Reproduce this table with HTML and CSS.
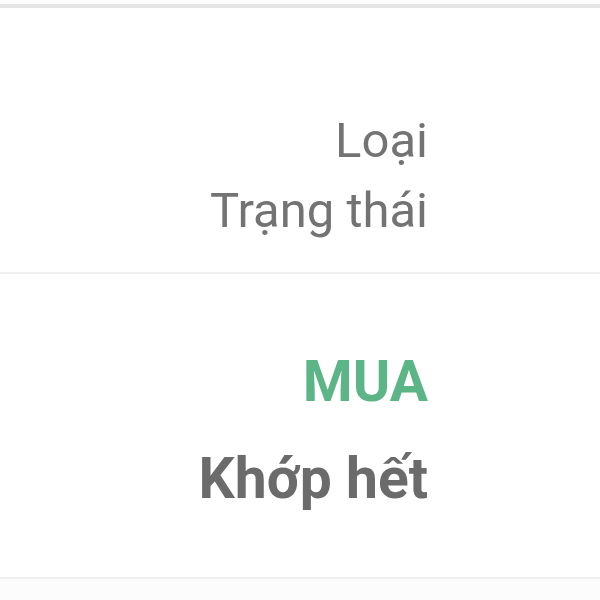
FILE: index.html
```html
<!DOCTYPE html>
<html>
<head>
<meta charset="utf-8">
<link rel="stylesheet" href="styles.css">
</head>
<body>
<div class="page">
  <div class="topline"></div>
  <section class="block labels">
    <div class="col">
      <div class="label">Loại</div>
      <div class="label">Trạng thái</div>
    </div>
  </section>
  <section class="block values">
    <div class="col">
      <div class="value buy">MUA</div>
      <div class="value">Khớp hết</div>
    </div>
  </section>
  <section class="block rest"></section>
</div>
</body>
</html>
```
FILE: styles.css
```css
html, body {
  margin: 0;
  padding: 0;
  background: #fdfdfd;
}
.page {
  width: 600px;
  height: 600px;
  overflow: hidden;
  font-family: Roboto, "Noto Sans", sans-serif;
  padding-top: 4px;
  box-sizing: border-box;
}
.topline {
  height: 4px;
  background: #e6e6e6;
}
.block {
  display: flex;
  justify-content: flex-start;
  box-sizing: border-box;
}
.col {
  width: 428px;
  display: flex;
  flex-direction: column;
  align-items: flex-end;
}
.labels {
  height: 266px;
  background: #ffffff;
  border-bottom: 2px solid #efefef;
  padding-top: 98px;
}
.label {
  font-size: 49px;
  line-height: 70px;
  color: #737373;
}
.values {
  height: 305px;
  background: #ffffff;
  border-bottom: 2px solid #f0f0f0;
  padding-top: 59px;
}
.value {
  font-size: 57px;
  font-weight: 700;
  line-height: 97px;
  color: #6b6b6b;
}
.value.buy {
  color: #5cb586;
}
.rest {
  height: 40px;
  background: #fcfcfc;
}
```
